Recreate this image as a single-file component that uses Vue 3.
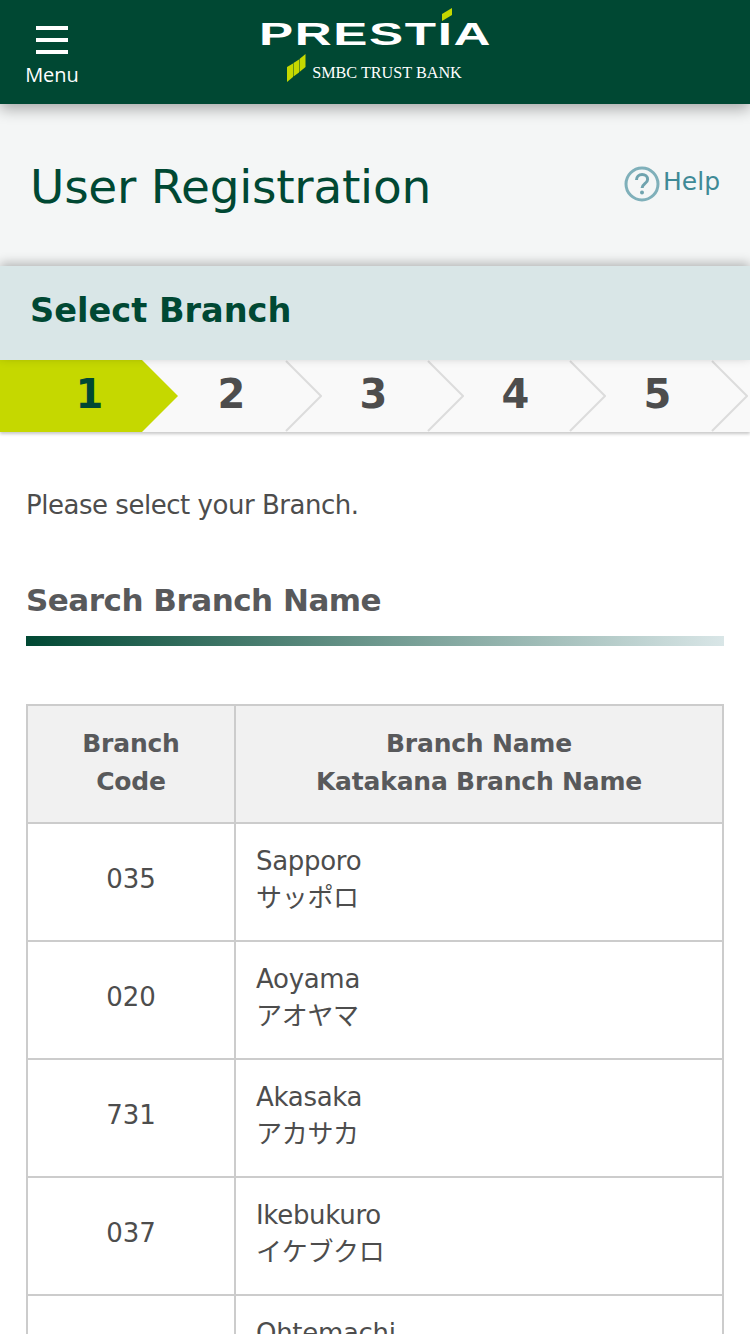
<script setup>
const steps = [1, 2, 3, 4, 5]
const rows = [
  { code: '035', name: 'Sapporo', kana: 'サッポロ' },
  { code: '020', name: 'Aoyama', kana: 'アオヤマ' },
  { code: '731', name: 'Akasaka', kana: 'アカサカ' },
  { code: '037', name: 'Ikebukuro', kana: 'イケブクロ' },
  { code: '010', name: 'Ohtemachi', kana: 'オオテマチ' }
]
</script>

<template>
  <div class="page">
    <header class="topbar">
      <div class="menu">
        <span class="burger"><i></i><i></i><i></i></span>
        <span class="menu-label">Menu</span>
      </div>
      <div class="logo">
        <div class="prestia-wrap">
          <span class="prestia">PRESTIA</span>
          <svg class="accent" width="10" height="13" viewBox="0 0 10 13"><polygon points="0,6 10,0 10,7 0,13" fill="#c5d800" /></svg>
        </div>
        <div class="smbc">
          <svg width="20" height="28" viewBox="0 0 20 28">
            <polygon points="1,13 7,9.5 7,23 1,28" fill="#c5d800" />
            <polygon points="7.5,9 13,5.5 13,18.5 7.5,22.5" fill="#c5d800" />
            <polygon points="13.5,5 19.5,0 19.5,13 13.5,18" fill="#c5d800" />
          </svg>
          <span class="smbc-text">SMBC TRUST BANK</span>
        </div>
      </div>
    </header>

    <section class="title-area">
      <h1>User Registration</h1>
      <div class="help">
        <svg width="36" height="36" viewBox="0 0 36 36">
          <circle cx="18" cy="18" r="16" fill="none" stroke="#7fb0ba" stroke-width="3" />
          <path d="M12.5 14c0-3.4 2.4-5.4 5.6-5.4s5.5 2 5.5 4.8c0 4.2-5.5 4.4-5.5 8.6" fill="none" stroke="#6fa3ae" stroke-width="3" />
          <circle cx="18" cy="26.5" r="2" fill="#6fa3ae" />
        </svg>
        <span class="help-text">Help</span>
      </div>
    </section>

    <h2 class="section-bar">Select Branch</h2>

    <nav class="steps">
      <div v-for="s in steps" :key="s" class="step" :class="{ active: s === 1 }">
        <svg v-if="s === 1" class="lime" width="178" height="72" viewBox="0 0 178 72"><polygon points="0,0 142,0 178,36 142,72 0,72" fill="#c5d800" /></svg>
        <svg v-else class="chev" width="37" height="72" viewBox="0 0 37 72"><polyline points="1,1 36,36 1,71" fill="none" stroke="#dcdcdc" stroke-width="2" /></svg>
        <span class="num">{{ s }}</span>
      </div>
    </nav>

    <main class="content">
      <p class="lead">Please select your Branch.</p>
      <h3 class="sub">Search Branch Name</h3>
      <div class="grad"></div>

      <table class="tbl">
        <colgroup><col class="c1" /><col /></colgroup>
        <thead>
          <tr>
            <th>Branch<br />Code</th>
            <th>Branch Name<br />Katakana Branch Name</th>
          </tr>
        </thead>
        <tbody>
          <tr v-for="r in rows" :key="r.code">
            <td class="code">{{ r.code }}</td>
            <td class="name">{{ r.name }}<br />{{ r.kana }}</td>
          </tr>
        </tbody>
      </table>
    </main>
  </div>
</template>

<style>
html, body { margin: 0; padding: 0; background: #fff; }
</style>

<style scoped>
.page {
  width: 750px;
  height: 1334px;
  overflow: hidden;
  background: #fff;
  font-family: "DejaVu Sans", "Noto Sans CJK JP", sans-serif;
  color: #4d4d4d;
}
.topbar {
  height: 104px;
  background: #004833;
  display: flex;
  justify-content: center;
  position: relative;
  z-index: 3;
  box-shadow: 0 5px 14px rgba(0, 0, 0, 0.32);
}
.menu {
  position: absolute;
  left: 26px;
  top: 26px;
  width: 52px;
  display: flex;
  flex-direction: column;
  align-items: center;
  color: #fff;
}
.burger { display: flex; flex-direction: column; gap: 8px; width: 32px; }
.burger i { display: block; height: 4px; background: #fff; }
.menu-label { font: 500 20px/24px "Open Sans", sans-serif; margin-top: 9px; }
.logo { display: flex; flex-direction: column; align-items: center; }
.prestia-wrap { position: relative; height: 54px; width: 228px; }
.prestia {
  position: absolute;
  left: -2px;
  top: 17px;
  font: bold 32px/34px "Liberation Sans", sans-serif;
  color: #fff;
  letter-spacing: 1px;
  transform-origin: 0 50%;
  transform: scaleX(1.6);
  white-space: nowrap;
}
.accent { position: absolute; left: 181px; top: 8px; }
.smbc {
  display: flex;
  align-items: flex-start;
  gap: 6px;
  margin-right: 2px;
  color: #fff;
  font: 16.2px/22px "Liberation Serif", serif;
}
.smbc-text { margin-top: 8px; }
.title-area {
  height: 162px;
  background: #f4f6f6;
  display: flex;
  justify-content: space-between;
  padding: 0 30px;
  box-sizing: border-box;
}
h1 {
  margin: 56px 0 0;
  font-size: 47px;
  letter-spacing: -0.27px;
  line-height: 54px;
  font-weight: 400;
  color: #004833;
}
.help {
  display: flex;
  align-items: flex-start;
  margin-top: 61px;
  color: #3f8a96;
  font-size: 25px;
  line-height: 32px;
}
.help svg { margin-top: 1px; margin-right: 3px; }
.help-text { margin-top: 1px; }
.section-bar {
  margin: 0;
  height: 94px;
  box-sizing: border-box;
  padding: 21px 30px 0;
  background: #d9e6e7;
  color: #004833;
  font-size: 33.6px;
  line-height: 48px;
  font-weight: 700;
  position: relative;
  z-index: 2;
  box-shadow: 0 -3px 10px rgba(0, 0, 0, 0.26);
}
.steps {
  height: 72px;
  background: #f9f9f9;
  display: flex;
  padding-left: 18px;
  position: relative;
  z-index: 1;
  box-shadow: 0 2px 3px rgba(0, 0, 0, 0.22);
}
.step {
  width: 142px;
  height: 72px;
  padding: 0 0 5px 1px;
  box-sizing: border-box;
  position: relative;
  display: flex;
  align-items: center;
  justify-content: center;
}
.lime { position: absolute; left: -18px; top: 0; }
.chev { position: absolute; left: 125px; top: 0; }
.num {
  position: relative;
  font-size: 40px;
  font-weight: 700;
  color: #4d4d4d;
}
.active .num { color: #004833; }
.content { padding: 0 26px; }
.lead { margin: 56px 0 0; font-size: 26px; letter-spacing: -0.47px; line-height: 34px; }
.sub {
  margin: 56px 0 0;
  font-size: 31px;
  letter-spacing: -0.5px;
  line-height: 44px;
  font-weight: 700;
  color: #58595b;
}
.grad {
  height: 10px;
  margin-top: 14px;
  background: linear-gradient(to right, #004833, #d9e6e7);
}
.tbl {
  width: 698px;
  margin-top: 58px;
  border-collapse: collapse;
  table-layout: fixed;
  border: 2px solid #ccc;
  font-size: 26px;
}
.c1 { width: 208px; }
th, td { border: 2px solid #ccc; box-sizing: border-box; }
th {
  height: 118px;
  background: #f1f1f1;
  color: #58595b;
  font-weight: 700;
  font-size: 25px;
  letter-spacing: -0.2px;
  line-height: 38px;
  padding: 0 0 2px;
  text-align: center;
}
td { height: 118px; padding: 0 0 4px; line-height: 37px; }
.code { text-align: center; padding-bottom: 6px; }
.name { padding-left: 20px; letter-spacing: -0.3px; }
</style>
